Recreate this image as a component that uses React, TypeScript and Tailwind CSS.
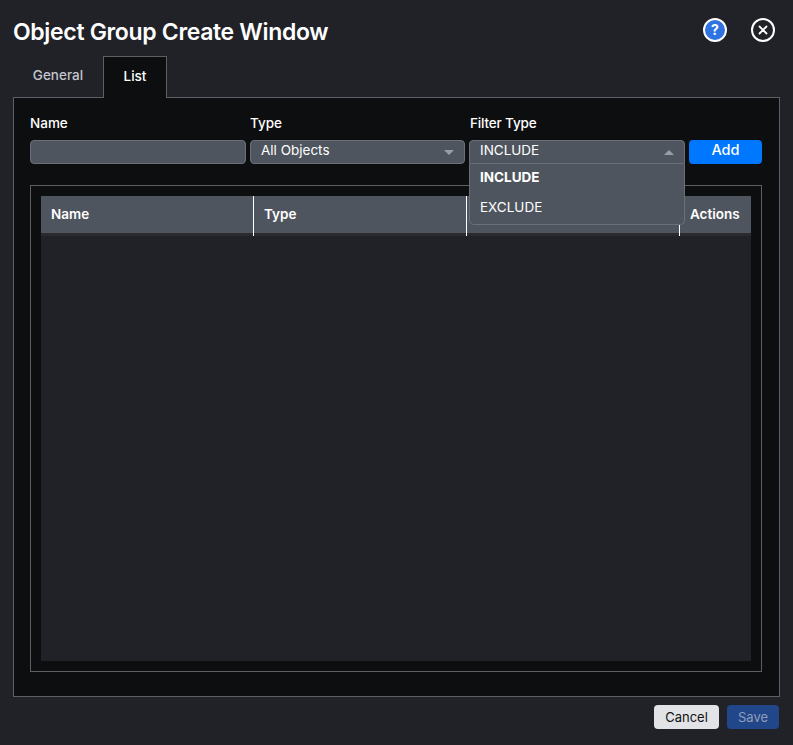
import React from "react";

function Caret({ up }: { up?: boolean }) {
  return (
    <svg width="10" height="5" viewBox="0 0 10 5" className="shrink-0">
      <path d={up ? "M0 5 L5 0 L10 5 Z" : "M0 0 L5 5 L10 0 Z"} fill="#9a9da3" />
    </svg>
  );
}

export default function App() {
  return (
    <div className="w-[793px] h-[745px] overflow-hidden bg-[#212228] text-white flex flex-col font-['Inter',sans-serif]">
      <header className="flex items-center justify-between h-[56px] pl-[13px] pr-[18px]">
        <h1 className="mt-[8px] text-[23px] font-semibold tracking-[-0.33px] leading-none">Object Group Create Window</h1>
        <div className="mt-[4px] flex items-center gap-[24px]">
          <button className="w-[24px] h-[24px] rounded-full border-2 border-white bg-[#2f73e0] flex items-center justify-center">
            <span className="text-[14px] font-bold leading-none">?</span>
          </button>
          <button className="w-[24px] h-[24px] rounded-full border-2 border-white flex items-center justify-center">
            <svg width="10" height="10" viewBox="0 0 10 10">
              <path d="M1.5 1.5 L8.5 8.5 M8.5 1.5 L1.5 8.5" stroke="#fff" strokeWidth="1.8" strokeLinecap="round" />
            </svg>
          </button>
        </div>
      </header>

      <div className="flex pl-[13px] h-[42px] relative z-10">
        <div className="w-[90px] h-[41px] pb-[3px] flex items-center justify-center text-[13.5px] font-medium text-[#c3c6cc]">General</div>
        <div className="w-[64px] h-[42px] pb-[2px] flex items-center justify-center text-[13.5px] font-medium bg-[#0d0e10] border border-b-0 border-[#5d5f64]">List</div>
      </div>

      <main className="mx-[13px] mt-[-1px] h-[600px] border border-[#5d5f64] bg-[#0d0e10] px-[16px] pt-[17px] flex flex-col">
        <div className="flex gap-[4px] items-end">
          <div className="w-[216px] flex flex-col gap-[8px]">
            <label className="text-[13.5px] font-medium leading-[17px]">Name</label>
            <input className="h-[24px] w-full rounded-[4px] bg-[#4f555e] border border-[#6b7078]" />
          </div>
          <div className="w-[215px] flex flex-col gap-[8px]">
            <label className="text-[13.5px] font-medium leading-[17px]">Type</label>
            <div className="h-[24px] rounded-[4px] bg-[#4f555e] border border-[#6b7078] pl-[10px] pr-[10px] flex items-center justify-between text-[13.5px]">
              <span className="mb-[4px]">All Objects</span>
              <Caret />
            </div>
          </div>
          <div className="w-[216px] flex flex-col gap-[8px] relative z-20">
            <label className="pl-[1px] text-[13.5px] tracking-[-0.15px] font-medium leading-[17px]">Filter Type</label>
            <div className="h-[24px] rounded-t-[4px] bg-[#4f555e] border border-[#6b7078] pl-[10px] pr-[10px] flex items-center justify-between text-[13.5px]">
              <span className="mb-[4px]">INCLUDE</span>
              <Caret up />
            </div>
            <div className="absolute left-0 right-0 top-[49px] h-[61px] bg-[#4f555e] border border-t-0 border-[#6b7078] rounded-b-[5px] flex flex-col text-[13.5px] pl-[10px]">
              <div className="h-[26px] flex items-center font-bold">INCLUDE</div>
              <div className="mt-[2px] h-[30px] flex items-center">EXCLUDE</div>
            </div>
          </div>
          <button className="w-[73px] h-[24px] pb-[4px] rounded-[4px] bg-[#0077ff] text-[14.5px] font-medium leading-none">Add</button>
        </div>

        <section className="mt-[21px] h-[487px] w-[732px] border border-[#5d5f64] p-[10px] flex">
          <div className="w-[710px] bg-[#212228] flex flex-col">
            <div className="flex h-[40px] bg-[#2a2b31] text-[13.5px] font-semibold">
              <div className="w-[212px] h-[37px] bg-[#4f555e] pl-[10px] flex items-center">Name</div>
              <div className="w-[213px] h-[40px] border-l border-white">
                <div className="h-[37px] bg-[#4f555e] pl-[10px] flex items-center">Type</div>
              </div>
              <div className="w-[213px] h-[40px] border-l border-white">
                <div className="h-[37px] bg-[#4f555e]" />
              </div>
              <div className="w-[72px] h-[40px] border-l border-white">
                <div className="h-[37px] bg-[#4f555e] pl-[10px] flex items-center">Actions</div>
              </div>
            </div>
          </div>
        </section>
      </main>

      <footer className="flex justify-end gap-[8px] pr-[14px] pt-[8px]">
        <button className="w-[65px] h-[24px] rounded-[4px] bg-[#e1e3e7] text-[#111] text-[13px] font-normal leading-none">Cancel</button>
        <button className="w-[52px] h-[24px] rounded-[4px] bg-[#21478a] text-[#8f9db8] text-[13px] font-normal leading-none">Save</button>
      </footer>
    </div>
  );
}
